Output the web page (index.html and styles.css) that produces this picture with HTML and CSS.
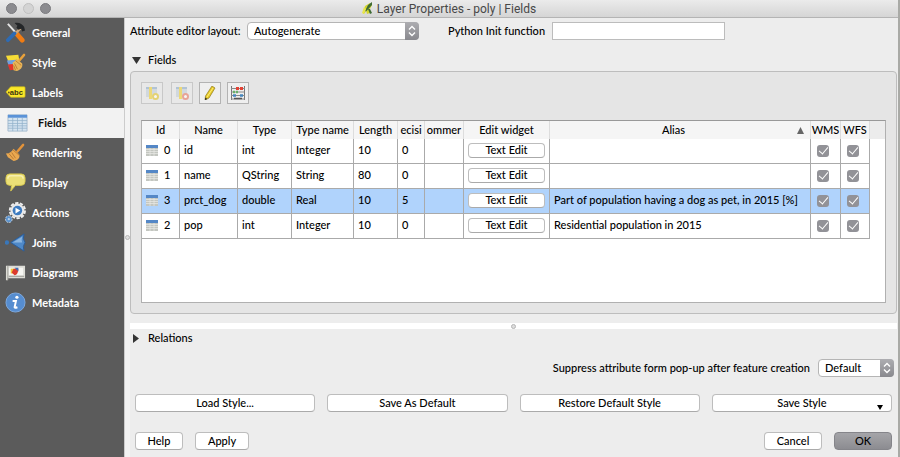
FILE: index.html
```html
<!DOCTYPE html>
<html lang="en">
<head>
<meta charset="utf-8">
<title>Layer Properties - poly | Fields</title>
<link rel="stylesheet" href="styles.css">
</head>
<body>
<svg class="defs" aria-hidden="true">
  <symbol id="sheet" viewBox="0 0 12 11">
    <rect width="12" height="11" fill="#c3c6c0"/>
    <rect width="12" height="3" fill="#5487c6"/>
    <path d="M0 4.500h12M0 6.500h12M0 8.500h12M4 3v8M8 3v8" stroke="#e9eae6" stroke-width=".7"/>
  </symbol>
  <symbol id="updown" viewBox="0 0 14 16">
    <path d="M4 6.500 7 3.500l3 3M4 9.500l3 3 3-3" fill="none" stroke="#fff" stroke-width="1.400"/>
  </symbol>
</svg>
<div class="window">
  <header class="titlebar">
    <div class="lights"><i></i><i class="off"></i><i></i></div>
    <h1>
      <svg width="11" height="13" viewBox="0 0 11 13"><path d="M8 1 3 4 1 12l2-1 1-3 1 4 3-1V7l2-4z" fill="#d3d42c"/><path d="M10 0 6 3 3 9l1 .5L10 3zM6 7l2 5 2-1-2-4z" fill="#3e6b35"/><path d="m2 5-2 6 2 1 2-5z" fill="#e8e64a"/></svg>
      Layer Properties - poly | Fields
    </h1>
  </header>
  <div class="body">
    <nav class="sidebar">
      <a href="#general"><svg viewBox="0 0 22 22"><path d="m3 2 9 10" stroke="#e5e5e5" stroke-width="2"/><path d="M12 12l6 7" stroke="#f07c13" stroke-width="5" stroke-linecap="round"/><path d="m17 6-6 6" stroke="#c9a77f" stroke-width="2.500"/><path d="m10 12-7 7" stroke="#2e6bb3" stroke-width="4" stroke-linecap="round"/><path d="M10 1c5-1 8 1 10 4l1 4-3 1-1-3-3 1-2-2 1-2z" fill="#242628"/></svg>General</a>
      <a href="#style"><svg viewBox="0 0 22 22"><path d="m1 4 13-1 1 6-11 2z" fill="#f6dc36"/><path d="m2 9 10-1 1 5-9 2z" fill="#6d9fe0"/><path d="m3 13 10-1 1 6-9 1z" fill="#e3342c"/><path d="m15 9 5-6" stroke="#e8a13b" stroke-width="2.500" stroke-linecap="round"/><path d="m12 7 6 5c1 4-2 7-6 8l-3-1-1-8c2-1 3-2 4-4z" fill="#e9b458"/><path d="m11 9 6 5M10 12l3 6M9 14l2 5" stroke="#a96a20" stroke-width=".7"/></svg>Style</a>
      <a href="#labels"><svg viewBox="0 0 22 22"><path d="M6 5h14q1 0 1 1v9q0 1-1 1H6l-5-5.500z" fill="#fbe829" stroke="#ccb81a" stroke-width=".7"/><circle cx="4" cy="11" r="1" fill="#665c11"/><text class="abc" x="5" y="14">abc</text></svg>Labels</a>
      <a href="#fields" class="current"><svg viewBox="0 0 22 22"><path d="M1 3h20v17H1z" fill="#d5e4f0" stroke="#a7bccf"/><path d="M1 3h20v3H1z" fill="#5b93d8"/><path d="M1 9h20M1 12h20M1 14.500h20M1 17h20M6 6v14M11 6v14M16 6v14" stroke="#92b1cb" stroke-width=".8"/></svg>Fields</a>
      <a href="#rendering"><svg viewBox="0 0 22 22"><path d="m13 10 6-7" stroke="#e2933a" stroke-width="2.500" stroke-linecap="round"/><path d="m9 7 6 6c1 4-2 6-6 7l-6-4-2-4c4 0 6-2 8-5z" fill="#e9a850"/><path d="m8 8 7 6M4 12l5 6M7 11l4 6" stroke="#a86725" stroke-width=".7"/></svg>Rendering</a>
      <a href="#display"><svg viewBox="0 0 22 22"><path d="M5 2h12q4 0 4 4v4q0 4-4 4h-6l-5 6 1-6H5q-4 0-4-4V6q0-4 4-4z" fill="#ebdf77" stroke="#d6c74f"/><path d="M3 7q0-3 3-3h10q3 0 3 3" fill="none" stroke="#f6efad" stroke-width="1.500"/></svg>Display</a>
      <a href="#actions"><svg viewBox="0 0 22 22"><circle cx="13" cy="9" r="8" fill="none" stroke="#eee" stroke-width="2" stroke-dasharray="3.500 1.500"/><circle cx="13" cy="9" r="7.300" fill="#e9e9e9"/><circle cx="13" cy="9" r="5" fill="#3d7bc0"/><path d="m11 6 5 3-5 3z" fill="#fff"/><circle cx="4" cy="18" r="3.500" fill="#5a92ce" stroke="#ccc" stroke-dasharray="2 1"/><circle cx="4" cy="18" r="1.200" fill="#b4cfe9"/></svg>Actions</a>
      <a href="#joins"><svg viewBox="0 0 22 22"><circle cx="2" cy="11" r="2.300" fill="#3977ba"/><path d="M6 11 20 2q-2 5 1 9-3 4-1 9z" fill="#4f89c8" stroke="#295d9d"/><path d="M8 11 18 5q-1 3 0 6z" fill="#8bb5df"/></svg>Joins</a>
      <a href="#diagrams"><svg viewBox="0 0 22 22"><path d="M1 4h20v13H3v2H1z" fill="#dcdcd6"/><path d="M4 6h15v8H4z" fill="#f6f6f2"/><path d="M3 4v15M4 15h16" stroke="#9a9a94"/><path d="M6 7h5v5H6z" fill="#f0c73a"/><path d="M9 7h5q0 6-4 7l-3-3z" fill="#dc3a2d"/><path d="M10 6h4v4z" fill="#426fb5"/></svg>Diagrams</a>
      <a href="#metadata"><svg viewBox="0 0 22 22"><circle cx="11" cy="11" r="10" fill="#568dd0" stroke="#7eaae0"/><circle cx="12.500" cy="5.500" r="1.700" fill="#fff"/><path d="M8 9.500h3.500L10 16q0 1 3 0" fill="none" stroke="#fff" stroke-width="2"/></svg>Metadata</a>
    </nav>
    <div class="grip"><i></i></div>
    <main>
      <div class="options">
        <label for="layout">Attribute editor layout:</label>
        <span class="select wide"><select id="layout"><option>Autogenerate</option></select><svg><use href="#updown"/></svg></span>
        <label for="init" class="init-label">Python Init function</label>
        <input id="init" type="text">
      </div>
      <h2><svg width="9" height="7"><path d="M0 0h9L4.500 7z" fill="#333"/></svg>Fields</h2>
      <section class="panel">
        <div class="tools">
          <button class="faded" aria-label="New column" disabled><svg viewBox="0 0 14 14"><path d="M1 1h11v10H1z" fill="#c3ced8"/><path d="M1 1h11v2H1z" fill="#8eabc9"/><path d="M4 1h3v12H4z" fill="#f0d030"/><circle cx="10.500" cy="10.500" r="2.500" fill="#fff" stroke="#e2c52a" stroke-width="2"/></svg></button>
          <button class="faded" aria-label="Delete column" disabled><svg viewBox="0 0 14 14"><path d="M1 1h11v10H1z" fill="#c3ced8"/><path d="M1 1h11v2H1z" fill="#8eabc9"/><path d="M4 1h3v12H4z" fill="#f0d030"/><circle cx="10.500" cy="10.500" r="2.500" fill="#fff" stroke="#e87862" stroke-width="2"/></svg></button>
          <button aria-label="Toggle editing"><svg viewBox="0 0 14 14"><path d="M9 0l3 2-6 10-4 2 .5-4z" fill="#e6c828" stroke="#8f7b20" stroke-width=".7"/><path d="m10 2-6 9" stroke="#fff07a"/><path d="m2 14 .3-2.500 2 1.500z" fill="#222"/></svg></button>
          <button aria-label="Field calculator"><svg viewBox="0 0 14 14"><path d="M.5 0v14M13.500 0v14" stroke="#777"/><path d="M0 2.500h14M0 6h14M0 9.500h14M0 13h14" stroke="#888"/><path d="M5 2.500h3M9 2.500h3" stroke="#e34234" stroke-width="3"/><path d="M2 6h6" stroke="#68b168" stroke-width="2.500" stroke-dasharray="2 1"/><path d="M2 9.500h3M9 9.500h3" stroke="#4686bd" stroke-width="2.500"/><path d="M3 12.500h8" stroke="#555" stroke-width="1.500"/></svg></button>
        </div>
        <div class="frame">
          <table>
            <colgroup><col class="c-id"><col class="c-name"><col class="c-type"><col class="c-tname"><col class="c-len"><col class="c-prec"><col class="c-com"><col class="c-edit"><col><col class="c-wms"><col class="c-wfs"><col class="c-rest"></colgroup>
            <thead><tr><th>Id</th><th>Name</th><th>Type</th><th>Type name</th><th>Length</th><th>ecisi</th><th>ommer</th><th>Edit widget</th><th><div class="sorted"><span>Alias</span><svg width="7" height="7"><path d="M0 7h7L3.500 0z" fill="#666"/></svg></div></th><th>WMS</th><th>WFS</th><td class="rest"></td></tr></thead>
            <tbody>
              <tr><td><span class="id"><svg><use href="#sheet"/></svg>0</span></td><td>id</td><td>int</td><td>Integer</td><td>10</td><td>0</td><td></td><td class="edit"><button>Text Edit</button></td><td></td><td class="tick"><input type="checkbox" aria-label="WMS" checked></td><td class="tick"><input type="checkbox" aria-label="WFS" checked></td></tr>
              <tr><td><span class="id"><svg><use href="#sheet"/></svg>1</span></td><td>name</td><td>QString</td><td>String</td><td>80</td><td>0</td><td></td><td class="edit"><button>Text Edit</button></td><td></td><td class="tick"><input type="checkbox" aria-label="WMS" checked></td><td class="tick"><input type="checkbox" aria-label="WFS" checked></td></tr>
              <tr class="selected"><td><span class="id"><svg><use href="#sheet"/></svg>3</span></td><td>prct_dog</td><td>double</td><td>Real</td><td>10</td><td>5</td><td></td><td class="edit"><button>Text Edit</button></td><td>Part of population having a dog as pet, in 2015 [%]</td><td class="tick"><input type="checkbox" aria-label="WMS" checked></td><td class="tick"><input type="checkbox" aria-label="WFS" checked></td></tr>
              <tr><td><span class="id"><svg><use href="#sheet"/></svg>2</span></td><td>pop</td><td>int</td><td>Integer</td><td>10</td><td>0</td><td></td><td class="edit"><button>Text Edit</button></td><td>Residential population in 2015</td><td class="tick"><input type="checkbox" aria-label="WMS" checked></td><td class="tick"><input type="checkbox" aria-label="WFS" checked></td></tr>
            </tbody>
          </table>
        </div>
      </section>
      <div class="splitter"><i></i></div>
      <h2 class="closed"><svg width="9" height="9"><path d="M1 0v9l6-4.500z" fill="#333"/></svg>Relations</h2>
      <div class="suppress">
        <label for="popup">Suppress attribute form pop-up after feature creation</label>
        <span class="select"><select id="popup"><option>Default</option></select><svg><use href="#updown"/></svg></span>
      </div>
      <div class="styles">
        <button>Load Style...</button><button>Save As Default</button><button>Restore Default Style</button><button class="menu">Save Style<svg width="6" height="5"><path d="M0 0h6L3 5z"/></svg></button>
      </div>
      <footer>
        <button class="help">Help</button><button class="apply">Apply</button><button class="cancel">Cancel</button><button class="ok">OK</button>
      </footer>
    </main>
  </div>
</div>
</body>
</html>
```
FILE: styles.css
```css
* { box-sizing: border-box; }
body {
  margin: 0;
  background: #a9aaa6;
  color: #000;
  font: 500 11px/16px Lato, "Noto Sans", sans-serif;
}
svg { display: block; flex: none; }
button, input, select { font: inherit; color: inherit; margin: 0; }
.defs { position: absolute; width: 0; height: 0; }
.window {
  display: flex;
  flex-direction: column;
  min-height: 100vh;
  margin-right: 2px;
  background: #ededed;
}

/* Title bar */
.titlebar {
  display: grid;
  grid-template-columns: 1fr auto 1fr;
  align-items: center;
  height: 18px;
  padding: 0 6px;
  background: linear-gradient(#ebebeb, #d5d5d5);
  border-bottom: 1px solid #b4b4b4;
}
.lights { display: flex; gap: 6px; }
.lights i { width: 11px; height: 11px; border-radius: 50%; background: #8b8b8f; border: 1px solid #7b7b7f; }
.lights .off { background: #d4d4d4; border-color: #c0c0c0; }
h1 {
  display: flex;
  align-items: center;
  gap: 4px;
  margin: 0;
  color: #484848;
  font: 12px/16px Roboto, "Liberation Sans", sans-serif;
}

/* Sidebar */
.body { display: flex; flex: 1; }
.sidebar { width: 124px; background: #5b5b5b; }
.sidebar a {
  display: flex;
  align-items: center;
  gap: 6px;
  height: 30px;
  padding: 0 0 1px 5px;
  color: #fff;
  font-weight: bold;
  text-decoration: none;
}
.sidebar svg { width: 21px; height: 21px; }
.sidebar .current { gap: 10px; padding-left: 7px; background: #f2f2f2; color: #111; }
.abc { font: bold 8px "Liberation Sans", sans-serif; fill: #3a350c; }
.grip { display: flex; align-items: center; width: 6px; background: #f3f3f3; border-left: 1px solid #ccc; }
.grip i, .splitter i { width: 5px; height: 5px; border: 1px solid #b5b5b5; border-radius: 50%; background: #ddd; }

/* Main column */
main { display: flex; flex: 1; flex-direction: column; min-width: 0; padding: 4px 1px 7px 0; }
.options { display: flex; align-items: center; height: 18px; }
.options label { width: 117px; white-space: nowrap; }
.options .init-label { width: 104px; margin-left: 29px; }
.options input { width: 173px; height: 18px; border: 1px solid #bcbcbc; background: #fff; }
.options .wide { width: 172px; }
.select { display: flex; position: relative; width: 76px; height: 18px; }
.select select {
  width: 100%;
  padding: 0 20px 1px 6px;
  appearance: none;
  border: 1px solid #b5b5b5;
  border-radius: 4px;
  background: #fff;
}
.select svg {
  position: absolute;
  right: 0;
  width: 14px;
  height: 18px;
  border-radius: 0 4px 4px 0;
  background: linear-gradient(#adadb1, #89898e);
  pointer-events: none;
}
h2 { display: flex; align-items: center; gap: 7px; height: 20px; margin: 10px 0 1px; padding-left: 2px; font: inherit; }
.panel {
  display: flex;
  flex: 1;
  flex-direction: column;
  padding: 10px;
  border: 1px solid #bdbdbd;
  border-radius: 4px;
  background: #e5e5e5;
}
.tools { display: flex; gap: 6px; margin-bottom: 16px; }
.tools button {
  display: grid;
  place-items: center;
  width: 22px;
  height: 22px;
  padding: 0;
  border: 1px solid #b3b3b3;
  background: #efefef;
}
.tools svg { width: 14px; height: 14px; }
.tools .faded { border-color: #c8c8c8; background: #e8e8e8; }
.tools .faded + .faded { margin-left: 2px; }
.tools .faded svg { opacity: .6; }

/* Attribute table */
.frame { flex: 1; border: 1px solid #b0b0b0; border-top-color: #999; background: #fff; }
table { width: 100%; table-layout: fixed; border-spacing: 0; }
th, td { overflow: hidden; padding: 0 0 0 4px; border-right: 1px solid #aaa; white-space: nowrap; }
th { height: 18px; padding: 0; border-right-color: #ddd; background: #f5f5f5; font-weight: inherit; line-height: 16px; }
thead .rest { border: 0; background: #ececec; }
tbody td { height: 25px; padding-bottom: 2px; border-bottom: 1px solid #aaa; }
.selected td { background: #b0d3fc; }
.c-id { width: 38px; }
.c-name { width: 58px; }
.c-type { width: 54px; }
.c-tname { width: 62px; }
.c-len { width: 44px; }
.c-prec { width: 27px; }
.c-com { width: 39px; }
.c-edit { width: 86px; }
.c-wms { width: 30px; }
.c-wfs { width: 29px; }
.c-rest { width: 15px; }
.id { display: flex; align-items: center; gap: 6px; }
.id svg { width: 12px; height: 11px; }
.sorted { display: grid; grid-template-columns: 1fr auto; align-items: center; padding-right: 6px; }
td.edit { padding: 0 4px 1px; }
td button { display: block; width: 100%; height: 15px; line-height: 12px; }
tbody .tick { padding: 0; }
.tick input {
  display: grid;
  place-items: center;
  width: 12px;
  height: 12px;
  margin-left: 6px;
  appearance: none;
  border-radius: 3px;
  background: #929297;
}
.tick input::after {
  width: 8px;
  height: 4px;
  margin-bottom: 3px;
  border: solid #fff;
  border-width: 0 0 1px 1px;
  content: "";
  transform: rotate(-50deg);
}

/* Lower area */
.splitter { display: flex; align-items: center; justify-content: center; height: 6px; margin-top: 9px; background: #fff; }
h2.closed { height: 18px; margin: 0; }
.suppress { display: flex; align-items: center; justify-content: flex-end; gap: 8px; margin-top: 12px; padding-right: 3px; }
.styles, footer { display: flex; gap: 12px; padding: 0 5px; }
.styles { margin: 17px 0 20px; }
.styles button { flex: 1; position: relative; }
.styles button, footer button, td button {
  padding: 0 0 1px;
  border: 1px solid #bdbdbd;
  border-bottom-color: #aaa;
  border-radius: 4px;
  background: #fff;
}
.styles button, footer button { height: 18px; line-height: 15px; }
.menu svg { position: absolute; right: 8px; bottom: 1px; }
.help { width: 48px; }
.apply { width: 54px; }
.cancel { width: 58px; margin-left: auto; }
footer .ok { width: 58px; border-color: #85858a; background: linear-gradient(#a5a5a9, #8c8c91); }
```
